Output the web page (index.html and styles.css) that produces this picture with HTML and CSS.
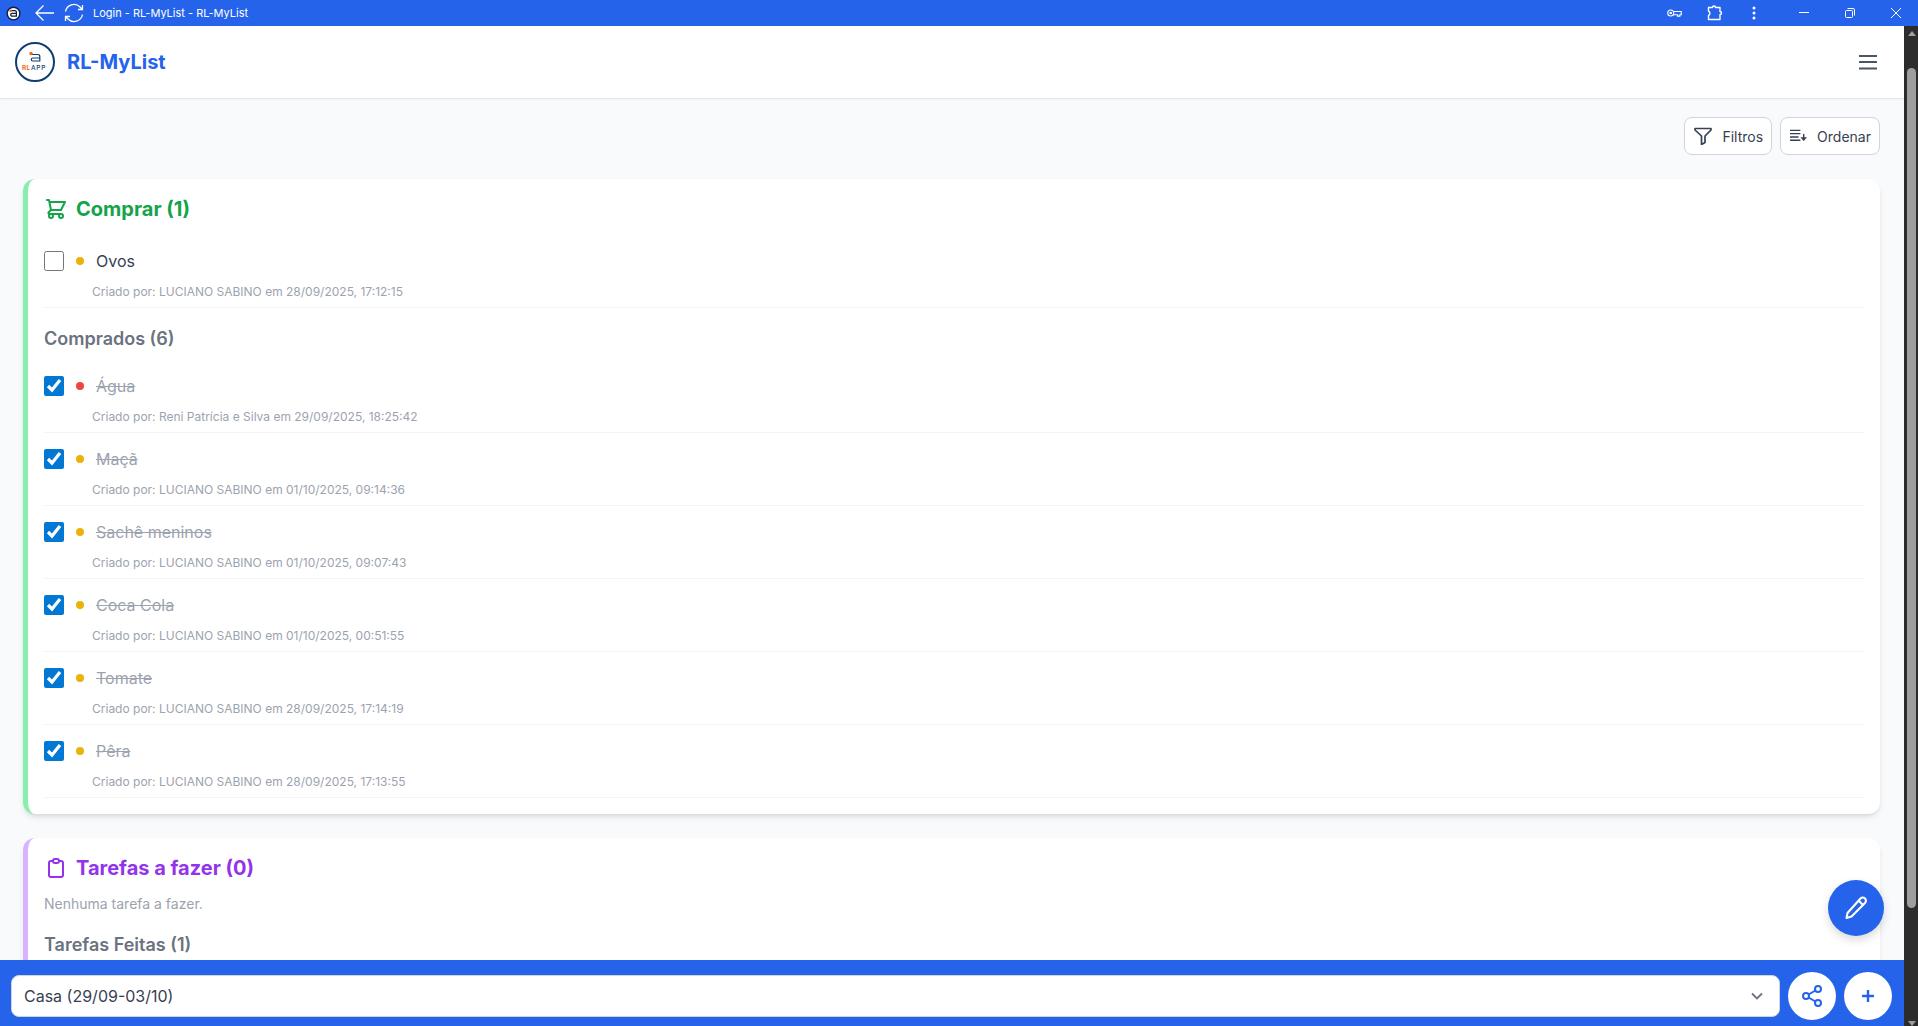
FILE: index.html
```html
<!DOCTYPE html>
<html lang="pt-BR">
<head>
    <meta charset="UTF-8">
    <title>Login - RL-MyList - RL-MyList</title>
    <link rel="stylesheet" href="styles.css">
</head>
<body>

    <div class="titlebar">
        <svg class="app-icon" width="15" height="15" viewBox="0 0 16 16">
            <circle cx="8" cy="8" r="7.5" fill="#0b1f3f"/>
            <circle cx="8" cy="8" r="6" fill="#fff"/>
            <path d="M5 5h4.500a1.600 1.600 0 0 1 1.600 1.600v4.200H6.500a1.500 1.500 0 0 1 0-3h4.600" fill="none" stroke="#0b1f3f" stroke-width="1.300"/>
            <circle cx="4.800" cy="5" r="1.400" fill="#ef6c1a"/>
        </svg>
        <svg class="back-icon" width="22" height="18" viewBox="0 0 22 18" fill="none" stroke="#fff" stroke-width="1.300">
            <path d="M20 9H2M9.500 1.500 2 9l7.500 7.500"/>
        </svg>
        <svg class="reload-icon" width="20" height="20" viewBox="0 0 20 20" fill="none" stroke="#fff" stroke-width="1.300">
            <path d="M1.500 8.500A8.600 8.600 0 0 1 16 4l2.500 2.500M18.500 2v4.500H14"/>
            <path d="M18.500 11.500A8.600 8.600 0 0 1 4 16l-2.500-2.500M1.500 18v-4.500H6"/>
        </svg>
        <span class="window-title">Login - RL-MyList - RL-MyList</span>
        <div class="window-tools">
            <svg class="tool-key" width="15" height="10" viewBox="0 0 16 10" fill="none" stroke="#fff" stroke-width="1.200">
                <circle cx="4" cy="5" r="3.200"/>
                <circle cx="4" cy="5" r="0.800" fill="#fff"/>
                <path d="M7.200 3.400h8v3.400h-1.500v1.500h-2.500V6.800H7.200"/>
            </svg>
            <svg class="tool-ext" width="16" height="16" viewBox="0 0 16 16" fill="none" stroke="#fff" stroke-width="1.400" stroke-linejoin="round">
                <path d="M1.500 2.500h4a1.500 1.500 0 0 1 3 0h4.500v4a1.500 1.500 0 0 1 0 3v5H1.500v-4a2.500 2.500 0 0 0 0-4.500z"/>
            </svg>
            <svg class="tool-dots" width="4" height="14" viewBox="0 0 4 14" fill="#fff">
                <circle cx="2" cy="2" r="1.500"/>
                <circle cx="2" cy="7" r="1.500"/>
                <circle cx="2" cy="12" r="1.500"/>
            </svg>
            <svg class="tool-min" width="10" height="2" viewBox="0 0 10 2" fill="#fff">
                <rect width="10" height="1"/>
            </svg>
            <svg class="tool-max" width="10" height="10" viewBox="0 0 10 10" fill="none" stroke="#fff">
                <rect x="0.500" y="2.500" width="7" height="7" rx="1"/>
                <path d="M2.500 0.500h5.500a1.500 1.500 0 0 1 1.500 1.500v5.500"/>
            </svg>
            <svg class="tool-close" width="10" height="10" viewBox="0 0 10 10" fill="none" stroke="#fff">
                <path d="M0 0l10 10M10 0 0 10"/>
            </svg>
        </div>
    </div>

    <div class="window-body">
        <div class="app">
            <header class="app-header">
                <div class="brand">
                    <svg class="logo" width="40" height="40" viewBox="0 0 40 40">
                        <circle cx="20" cy="20" r="19" fill="#fff" stroke="#0f3d6e" stroke-width="2"/>
                        <path d="M16 12.500h7a1.800 1.800 0 0 1 1.800 1.800v4.700h-7a1.500 1.500 0 0 1 0-3h7" fill="none" stroke="#0f3d6e" stroke-width="1.200"/>
                        <circle cx="16" cy="11.500" r="1.700" fill="#ef6c1a"/>
                        <text x="7" y="28" class="logo-rl">RL</text>
                        <text x="16" y="28" class="logo-app">APP</text>
                    </svg>
                    <span class="brand-name">RL-MyList</span>
                </div>
                <svg class="menu-icon" width="18" height="16" viewBox="0 0 18 16" fill="#4b5563">
                    <rect y="1" width="18" height="2"/>
                    <rect y="7" width="18" height="2"/>
                    <rect y="13.500" width="18" height="2"/>
                </svg>
            </header>

            <main class="content">
                <div class="actions">
                    <button class="action-btn">
                        <svg width="18" height="18" viewBox="0 0 18 18" fill="none" stroke="#374151" stroke-width="1.700" stroke-linejoin="round">
                            <path d="M1 1.500h16v1.500l-6 6v6.500l-3.500 2V9l-6.500-6z"/>
                        </svg>
                        Filtros
                    </button>
                    <button class="action-btn">
                        <svg width="17" height="14" viewBox="0 0 18 14" fill="none" stroke="#374151" stroke-width="1.500">
                            <path d="M0 1h11M0 4.500h11M0 8h9M0 11.500h11M14.500 5v6.500"/>
                            <path d="M11 8.300l3.500 4 3.500-4z" fill="#374151" stroke="none"/>
                        </svg>
                        Ordenar
                    </button>
                </div>

                <section class="card card-green">
                    <h2 class="card-title title-green">
                        <svg width="24" height="24" viewBox="0 0 24 24" fill="none" stroke="#16a34a" stroke-width="2" stroke-linecap="round" stroke-linejoin="round">
                            <path d="M3 3h2l.4 2M7 13h10l4-8H5.400M7 13 5.400 5M7 13l-2.293 2.293c-.63.63-.184 1.707.707 1.707H17m0 0a2 2 0 1 0 0 4 2 2 0 0 0 0-4zm-8 2a2 2 0 1 1-4 0 2 2 0 0 1 4 0z"/>
                        </svg>
                        Comprar (1)
                    </h2>
                    <div class="item">
                        <div class="item-main">
                            <input type="checkbox" class="check">
                            <span class="dot dot-yellow"></span>
                            <span class="item-name">Ovos</span>
                        </div>
                        <div class="item-meta">Criado por: LUCIANO SABINO em 28/09/2025, 17:12:15</div>
                    </div>

                    <h3 class="sub-title">Comprados (6)</h3>
                    <div class="item done">
                        <div class="item-main">
                            <input type="checkbox" class="check" checked>
                            <span class="dot dot-red"></span>
                            <span class="item-name">Água</span>
                        </div>
                        <div class="item-meta">Criado por: Reni Patrícia e Silva em 29/09/2025, 18:25:42</div>
                    </div>
                    <div class="item done">
                        <div class="item-main">
                            <input type="checkbox" class="check" checked>
                            <span class="dot dot-yellow"></span>
                            <span class="item-name">Maçã</span>
                        </div>
                        <div class="item-meta">Criado por: LUCIANO SABINO em 01/10/2025, 09:14:36</div>
                    </div>
                    <div class="item done">
                        <div class="item-main">
                            <input type="checkbox" class="check" checked>
                            <span class="dot dot-yellow"></span>
                            <span class="item-name">Sachê meninos</span>
                        </div>
                        <div class="item-meta">Criado por: LUCIANO SABINO em 01/10/2025, 09:07:43</div>
                    </div>
                    <div class="item done">
                        <div class="item-main">
                            <input type="checkbox" class="check" checked>
                            <span class="dot dot-yellow"></span>
                            <span class="item-name">Coca Cola</span>
                        </div>
                        <div class="item-meta">Criado por: LUCIANO SABINO em 01/10/2025, 00:51:55</div>
                    </div>
                    <div class="item done">
                        <div class="item-main">
                            <input type="checkbox" class="check" checked>
                            <span class="dot dot-yellow"></span>
                            <span class="item-name">Tomate</span>
                        </div>
                        <div class="item-meta">Criado por: LUCIANO SABINO em 28/09/2025, 17:14:19</div>
                    </div>
                    <div class="item done">
                        <div class="item-main">
                            <input type="checkbox" class="check" checked>
                            <span class="dot dot-yellow"></span>
                            <span class="item-name">Pêra</span>
                        </div>
                        <div class="item-meta">Criado por: LUCIANO SABINO em 28/09/2025, 17:13:55</div>
                    </div>
                </section>

                <section class="card card-purple">
                    <h2 class="card-title title-purple">
                        <svg width="24" height="24" viewBox="0 0 24 24" fill="none" stroke="#9333ea" stroke-width="2" stroke-linecap="round" stroke-linejoin="round">
                            <path d="M9 5H7a2 2 0 0 0-2 2v12a2 2 0 0 0 2 2h10a2 2 0 0 0 2-2V7a2 2 0 0 0-2-2h-2M9 5a2 2 0 0 0 2 2h2a2 2 0 0 0 2-2M9 5a2 2 0 0 1 2-2h2a2 2 0 0 1 2 2"/>
                        </svg>
                        Tarefas a fazer (0)
                    </h2>
                    <p class="empty">Nenhuma tarefa a fazer.</p>
                    <h3 class="sub-title">Tarefas Feitas (1)</h3>
                </section>
            </main>

            <footer class="bottom-bar">
                <div class="list-select">
                    <span>Casa (29/09-03/10)</span>
                    <svg width="12" height="8" viewBox="0 0 12 8" fill="none" stroke="#6b7280" stroke-width="1.800">
                        <path d="M1 1.500l5 5 5-5"/>
                    </svg>
                </div>
                <button class="round-btn">
                    <svg width="24" height="24" viewBox="0 0 24 24" fill="none" stroke="#2563eb" stroke-width="2">
                        <circle cx="18" cy="5" r="3"/>
                        <circle cx="6" cy="12" r="3"/>
                        <circle cx="18" cy="19" r="3"/>
                        <path d="M8.600 10.500l6.800-4M8.600 13.500l6.800 4"/>
                    </svg>
                </button>
                <button class="round-btn">
                    <svg width="14" height="14" viewBox="0 0 14 14" fill="none" stroke="#2563eb" stroke-width="2.400">
                        <path d="M7 1v12M1 7h12"/>
                    </svg>
                </button>
            </footer>

            <button class="fab">
                <svg width="26" height="26" viewBox="0 0 26 26" fill="none" stroke="#fff" stroke-width="2.100" stroke-linejoin="round">
                    <path d="M17.500 3.500a2.800 2.800 0 0 1 4.500 4.500L8.500 21.500 3.500 23l1-5z"/>
                    <path d="M15.500 5.500l5 5"/>
                </svg>
            </button>
        </div>

        <div class="scrollbar">
            <span class="arrow-up"></span>
            <div class="scroll-track"><div class="scroll-thumb"></div></div>
            <span class="arrow-down"></span>
        </div>
    </div>

</body>
</html>
```

FILE: styles.css
```css
* {
    box-sizing: border-box;
}
html, body {
    height: 100%;
}
body {
    margin: 0;
    display: flex;
    flex-direction: column;
    overflow: hidden;
    font-family: Inter, "Noto Sans", sans-serif;
    background-color: #f9fafb;
    color: #374151;
}

/* window chrome */
.titlebar {
    display: flex;
    align-items: center;
    flex: 0 0 26px;
    padding-left: 6px;
    background-color: #2563eb;
}
.back-icon {
    margin-left: 13px;
}
.reload-icon {
    margin-left: 8px;
}
.window-title {
    margin-left: 9px;
    font-size: 11px;
    color: #fff;
}
.window-tools {
    display: flex;
    align-items: center;
    margin-left: auto;
}
.tool-key {
    margin-right: 25px;
}
.tool-ext {
    margin-right: 29px;
}
.tool-dots {
    margin-right: 43px;
}
.tool-min {
    margin-right: 36px;
}
.tool-max {
    margin-right: 36px;
}
.tool-close {
    margin-right: 17px;
}
.window-body {
    display: flex;
    flex: 1;
    min-height: 0;
}

/* app */
.app {
    position: relative;
    display: flex;
    flex-direction: column;
    flex: 1;
    min-width: 0;
}
.app-header {
    display: flex;
    align-items: center;
    justify-content: space-between;
    flex: 0 0 73px;
    padding: 0 27px 0 15px;
    background-color: #fff;
    border-bottom: 1px solid #e5e7eb;
    box-shadow: 0 1px 2px rgba(0, 0, 0, 0.03);
}
.brand {
    display: flex;
    align-items: center;
    gap: 12px;
}
.logo-rl {
    font-size: 6.500px;
    font-weight: 700;
    letter-spacing: 0.300px;
    fill: #ef6c1a;
}
.logo-app {
    font-size: 6.500px;
    font-weight: 500;
    letter-spacing: 0.700px;
    fill: #0f3d6e;
}
.brand-name {
    font-size: 20px;
    font-weight: 700;
    color: #2563eb;
}
.content {
    flex: 1;
    min-height: 0;
    overflow: hidden;
    padding: 18px 24px 0 23px;
}
.actions {
    display: flex;
    justify-content: flex-end;
    gap: 8px;
    margin-bottom: 24px;
}
.action-btn {
    display: flex;
    align-items: center;
    gap: 10px;
    height: 38px;
    padding: 0 8px 0 9px;
    font-family: inherit;
    font-size: 14px;
    color: #374151;
    background-color: #fff;
    border: 1px solid #d1d5db;
    border-radius: 8px;
}

/* cards */
.card {
    padding: 16px;
    margin-bottom: 24px;
    background-color: #fff;
    border-left: 5px solid;
    border-radius: 12px;
}
.card-green {
    border-left-color: #86efac;
    box-shadow: 0 4px 6px -1px rgba(0, 0, 0, 0.1), 0 2px 4px -2px rgba(0, 0, 0, 0.1);
}
.card-purple {
    border-left-color: #d8b4fe;
    box-shadow: 0 4px 6px -1px rgba(0, 0, 0, 0.1);
}
.card-title {
    display: flex;
    align-items: center;
    gap: 8px;
    margin: 0;
    height: 28px;
    font-size: 20px;
    font-weight: 700;
}
.title-green {
    color: #16a34a;
}
.title-purple {
    color: #9333ea;
}
.sub-title {
    margin: 17px 0 7px;
    font-size: 18px;
    line-height: 28px;
    font-weight: 600;
    color: #6b7280;
}
.item {
    height: 73px;
    padding-top: 14px;
    border-bottom: 1px solid #f3f4f6;
}
.card-title + .item {
    margin-top: 12px;
}
.item-main {
    display: flex;
    align-items: center;
    height: 24px;
}
.check {
    width: 20px;
    height: 20px;
    margin: 0;
    accent-color: #0078d4;
}
.dot {
    width: 8px;
    height: 8px;
    margin-left: 12px;
    border-radius: 50%;
}
.dot-yellow {
    background-color: #eab308;
}
.dot-red {
    background-color: #ef4444;
}
.item-name {
    margin-left: 12px;
    font-size: 16px;
}
.item-meta {
    margin: 11px 0 0 48px;
    font-size: 12px;
    line-height: 16px;
    color: #9ca3af;
}
.done .item-name {
    color: #9ca3af;
    text-decoration: line-through;
}
.empty {
    margin: 12px 0 0;
    font-size: 14px;
    line-height: 20px;
    color: #9ca3af;
}

/* bottom */
.bottom-bar {
    display: flex;
    align-items: center;
    gap: 8px;
    flex: 0 0 66px;
    padding: 6px 12px 0 11px;
    background-color: #2563eb;
}
.list-select {
    display: flex;
    align-items: center;
    justify-content: space-between;
    flex: 1;
    height: 42px;
    padding: 0 16px 0 12px;
    font-size: 16px;
    color: #374151;
    background-color: #fff;
    border: 1px solid #d1d5db;
    border-radius: 8px;
}
.round-btn {
    display: flex;
    align-items: center;
    justify-content: center;
    width: 48px;
    height: 48px;
    padding: 0;
    background-color: #fff;
    border: none;
    border-radius: 50%;
}
.fab {
    position: absolute;
    right: 20px;
    bottom: 90px;
    display: flex;
    align-items: center;
    justify-content: center;
    width: 56px;
    height: 56px;
    padding: 0;
    background-color: #2563eb;
    border: none;
    border-radius: 50%;
    box-shadow: 0 4px 10px rgba(0, 0, 0, 0.15);
}

/* scrollbar */
.scrollbar {
    display: flex;
    flex-direction: column;
    align-items: center;
    flex: 0 0 14px;
    background-color: #2c2c2c;
}
.arrow-up, .arrow-down {
    flex: 0 0 auto;
    width: 0;
    height: 0;
    border-left: 4.500px solid transparent;
    border-right: 4.500px solid transparent;
}
.arrow-up {
    margin: 5px 0 0 1px;
    border-bottom: 5px solid #a0a0a0;
}
.arrow-down {
    margin-left: 1px;
    border-top: 5px solid #a0a0a0;
}
.scroll-track {
    flex: 1;
    width: 100%;
    padding: 32px 2px 0 3px;
}
.scroll-thumb {
    height: 840px;
    background-color: #9e9e9e;
    border-radius: 5px;
}
```
